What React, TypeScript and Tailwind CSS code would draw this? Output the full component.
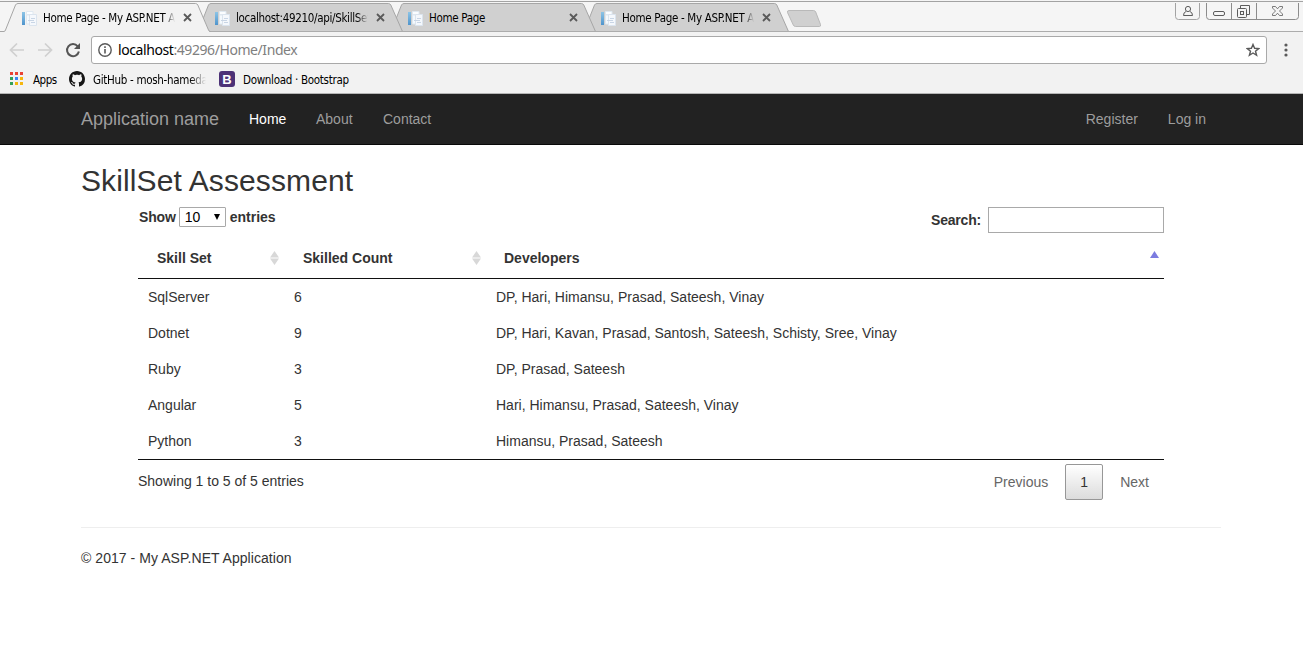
import React from "react";

const tabs = [
  { title: "Home Page - My ASP.NET A", faded: true },
  { title: "localhost:49210/api/SkillSet", faded: true },
  { title: "Home Page", faded: false },
  { title: "Home Page - My ASP.NET A", faded: true },
];

const rows = [
  { skill: "SqlServer", count: 6, developers: "DP, Hari, Himansu, Prasad, Sateesh, Vinay" },
  { skill: "Dotnet", count: 9, developers: "DP, Hari, Kavan, Prasad, Santosh, Sateesh, Schisty, Sree, Vinay" },
  { skill: "Ruby", count: 3, developers: "DP, Prasad, Sateesh" },
  { skill: "Angular", count: 5, developers: "Hari, Himansu, Prasad, Sateesh, Vinay" },
  { skill: "Python", count: 3, developers: "Himansu, Prasad, Sateesh" },
];

function PageIcon() {
  return (
    <svg width="16" height="16" viewBox="0 0 16 16" className="shrink-0">
      <defs>
        <linearGradient id="bar" x1="0" y1="0" x2="0" y2="1">
          <stop offset="0" stopColor="#8cc4e6" />
          <stop offset="1" stopColor="#4f94cc" />
        </linearGradient>
      </defs>
      <rect x="1" y="2" width="3" height="13" fill="url(#bar)" />
      <path d="M5.500 1.500h6.500v3h-6.500z" fill="#fbfdff" stroke="#dfe8f0" />
      <path d="M5.500 5h4v9h-4z" fill="#f4f9fd" stroke="#dfe8f0" />
      <path d="M8.500 4.500h7v11h-7z" fill="#f5f8fc" stroke="#dbe4ee" />
      <path d="M10 8.500h4M7 10.500h6M10 12.500h4" stroke="#c8d5e5" />
    </svg>
  );
}

function TabShapes() {
  return (
    <svg width="1303" height="32" viewBox="0 0 1303 32" className="absolute left-0 top-0">
      <path d="M0 1.500H1303" stroke="#a3a3a3" />
      {[579, 386, 193].map((x) => (
        <path
          key={x}
          transform={`translate(${x} 0)`}
          d="M5 31.500L15.500 5Q16.300 3.500 18 3.500H195.500Q197 3.500 197.800 5L209.500 31.500Z"
          fill="#d0d0d0"
          stroke="#a6a6a6"
        />
      ))}
      <path d="M203 31.500H1303" stroke="#acacac" />
      <path d="M5 32L15.500 5Q16.300 3.500 18 3.500H195.500Q197 3.500 197.800 5L209.500 32Z" fill="#f2f2f2" />
      <path
        d="M0 31.500H4Q5 31.500 5.500 30L15.500 5Q16.300 3.500 18 3.500H195.500Q197 3.500 197.800 5L208.500 30Q209 31.500 210.500 31.500"
        fill="none"
        stroke="#a6a6a6"
      />
      <path
        d="M789 10.500H813.500Q815 10.500 815.700 12L820.500 24.500Q821 26.500 819.500 26.500H795.500Q794 26.500 793.300 25L787.500 12.500Q787 10.500 789 10.500Z"
        fill="#d0d0d0"
        stroke="#b9b9b9"
      />
    </svg>
  );
}

function WindowControls() {
  return (
    <svg width="125" height="20" viewBox="0 0 125 20" className="absolute left-[1175px] top-0" fill="none" stroke="#8c8c8c">
      <path d="M.5 3V16.500Q.5 19.500 3.500 19.500H21.500Q24.500 19.500 24.500 16.500V3" stroke="#a3a3a3" />
      <path d="M31.500 3V16.500Q31.500 19.500 34.500 19.500H120.500Q123.500 19.500 123.500 16.500V3M56.500 3V19M81.500 3V19" />
      <g stroke="#5c5c5c">
        <circle cx="13" cy="9" r="2.600" />
        <path d="M11 11.500Q8.500 12.300 8.500 15.500H17.500Q17.500 12.300 15 11.500" />
        <rect x="38.500" y="11.500" width="11" height="4" rx="1.500" />
        <path d="M65.500 8V5.500H74.500V14.500H71.500" />
        <rect x="62.500" y="8.500" width="9" height="9" rx="1" />
        <rect x="65.500" y="11.500" width="3" height="3" />
        <path
          d="M97.500 6.500H100.500L102.500 8.800L104.500 6.500H107.500V8L104.500 11L107.500 14V15.500H104.500L102.500 13.200L100.500 15.500H97.500V14L100.500 11L97.500 8Z"
          strokeWidth=".8"
        />
      </g>
    </svg>
  );
}

function Browser() {
  return (
    <div className="h-[94px] bg-[#f2f2f2] font-['DejaVu_Sans_Condensed','Noto_Sans',sans-serif] text-[11.5px] text-black">
      <div className="relative h-8 bg-[#f5f5f5]">
        <TabShapes />
        <div className="relative flex h-8 pl-[21px] pt-[9px]">
          {tabs.map((t, i) => (
            <div key={i} className="flex h-[17px] w-[193px] items-center">
              <PageIcon />
              <span
                className={
                  t.faded
                    ? "ml-[6px] w-[132px] whitespace-nowrap leading-4 tracking-[-0.32px] [mask-image:linear-gradient(to_right,#000_92%,transparent)]"
                    : "ml-[6px] w-[132px] whitespace-nowrap leading-4 tracking-[-0.32px]"
                }
              >
                {t.title}
              </span>
              <svg width="9" height="9" viewBox="0 0 9 9" className="ml-[8px]">
                <path d="M1 1L8 8M8 1L1 8" stroke="#5a5a5a" strokeWidth="1.800" />
              </svg>
            </div>
          ))}
        </div>
        <WindowControls />
      </div>
      <div className="flex h-[36px] items-center">
        <svg width="91" height="36" viewBox="0 0 91 36" className="shrink-0" fill="none">
          <path d="M24 18H11M17 11.500L10.500 18L17 24.500M38 18H51M45 11.500L51.500 18L45 24.500" stroke="#d0d0d0" strokeWidth="1.700" />
          <path d="M77.700 14.300A6 6 0 1 0 78.900 19.500" stroke="#555" strokeWidth="2" />
          <path d="M80 11V17H74Z" fill="#555" />
        </svg>
        <div className="flex h-[28px] w-[1176px] items-center rounded-[3px] border border-[#a9a9a9] bg-white pl-[6px] pr-[6px]">
          <svg width="14" height="14" viewBox="0 0 14 14" fill="none" stroke="#5a5a5a">
            <circle cx="7" cy="7" r="6.200" strokeWidth="1.400" />
            <path d="M7 6V10.500M7 3.300V4.900" strokeWidth="1.600" />
          </svg>
          <span className="ml-[6px] whitespace-nowrap font-['Noto_Sans',sans-serif] text-[14px] tracking-[-0.42px] text-[#808080]">
            <span className="text-black">localhost</span>:49296/Home/Index
          </span>
          <svg width="14" height="14" viewBox="0 0 14 14" className="ml-auto" fill="none" stroke="#5a5a5a" strokeWidth="1.400">
            <path d="M7 1.500L8.600 5.300L12.700 5.600L9.500 8.200L10.600 12.300L7 10L3.400 12.300L4.500 8.200L1.300 5.600L5.400 5.300Z" />
          </svg>
        </div>
        <svg width="4" height="14" viewBox="0 0 4 14" className="ml-[17px]" fill="#5a5a5a">
          <circle cx="2" cy="2" r="1.600" />
          <circle cx="2" cy="7" r="1.600" />
          <circle cx="2" cy="12" r="1.600" />
        </svg>
      </div>
      <div className="flex h-[26px] items-start border-b border-[#b5b5b5] pl-[10px]">
        <svg width="13" height="13" viewBox="0 0 13 13" className="mt-[4px]">
          <path d="M0 0h3v3H0zM5 0h3v3H5zM10 0h3v3h-3z" fill="#ea4335" />
          <path d="M0 5h3v3H0zM0 10h3v3H0z" fill="#34a058" />
          <path d="M5 5h3v3H5z" fill="#3b85f4" />
          <path d="M10 5h3v3h-3zM5 10h3v3H5zM10 10h3v3h-3z" fill="#f5b60d" />
        </svg>
        <span className="ml-[10px] mt-[4px] w-[26px] leading-4 tracking-[-0.5px]">Apps</span>
        <svg width="16" height="16" viewBox="0 0 16 16" className="ml-[10px] mt-[3px]">
          <path
            fill="#161616"
            d="M8 0C3.580 0 0 3.580 0 8c0 3.540 2.290 6.530 5.470 7.590.4.070.55-.17.55-.38 0-.19-.01-.82-.01-1.490-2.010.37-2.530-.49-2.690-.94-.09-.23-.48-.94-.82-1.130-.28-.15-.68-.52-.01-.53.63-.01 1.080.58 1.230.82.72 1.210 1.870.87 2.330.66.07-.52.28-.87.51-1.070-1.780-.2-3.640-.89-3.640-3.950 0-.87.31-1.590.82-2.150-.08-.2-.36-1.020.08-2.120 0 0 .67-.21 2.200.82.64-.18 1.320-.27 2-.27s1.360.09 2 .27c1.530-1.040 2.200-.82 2.200-.82.44 1.100.16 1.920.08 2.120.51.56.82 1.270.82 2.150 0 3.070-1.870 3.750-3.650 3.950.29.25.54.73.54 1.480 0 1.070-.01 1.930-.01 2.200 0 .21.15.46.55.38A8.010 8.010 0 0 0 16 8c0-4.420-3.580-8-8-8z"
          />
        </svg>
        <span className="ml-[8px] mt-[4px] w-[113px] whitespace-nowrap leading-4 tracking-[-0.3px] [mask-image:linear-gradient(to_right,#000_86%,transparent)]">
          GitHub - mosh-hameda
        </span>
        <span className="ml-[13px] mt-[3px] flex h-4 w-4 items-center justify-center rounded-[3px] bg-[#4d3277] font-['Liberation_Sans',sans-serif] text-[13px] font-bold leading-none text-white">
          B
        </span>
        <span className="ml-[8px] mt-[4px] whitespace-nowrap leading-4 tracking-[-0.3px]">Download · Bootstrap</span>
      </div>
    </div>
  );
}

function SortBoth() {
  return (
    <svg width="9" height="14" viewBox="0 0 9 14" fill="#d8d8d8">
      <path d="M4.500 0L9 6.500H0ZM4.500 14L9 7.500H0Z" />
    </svg>
  );
}

export default function App() {
  return (
    <div className="h-[665px] w-[1303px] overflow-hidden bg-white font-['Liberation_Sans',Arial,sans-serif] text-[14px] leading-5 text-[#333]">
      <Browser />
      <nav className="flex h-[51px] items-center border-b border-[#080808] bg-[#222] pl-[81px] pr-[97px] text-[#9d9d9d]">
        <a className="w-[168px] text-[18px]">Application name</a>
        <a className="w-[67px] text-white">Home</a>
        <a className="w-[67px]">About</a>
        <a>Contact</a>
        <a className="ml-auto">Register</a>
        <a className="ml-[30px]">Log in</a>
      </nav>
      <main className="ml-[81px] w-[1140px]">
        <h2 className="h-[62px] pt-[19px] text-[30px] leading-[33px] tracking-[0.11px]">SkillSet Assessment</h2>
        <section className="mx-auto w-[1026px]">
          <div className="flex h-[31px] items-start justify-between font-bold">
            <label className="flex h-5 items-center pl-px">
              <span className="tracking-[-0.15px]">Show</span>
              <span className="ml-[3px] mr-[4px] flex h-5 w-[47px] items-center justify-between rounded-[1px] border border-[#a9a9a9] pl-[5px] pr-[5px] font-normal text-black">
                10
                <svg width="6" height="6" viewBox="0 0 6 6">
                  <path d="M0 0H6L3 6Z" fill="#000" />
                </svg>
              </span>
              entries
            </label>
            <label className="flex items-center tracking-[-0.2px]">
              Search:
              <input className="ml-[7px] h-[26px] w-[176px] border border-[#a9a9a9] bg-white" />
            </label>
          </div>
          <table className="w-full table-fixed border-separate border-spacing-0 text-left">
            <colgroup>
              <col className="w-[146px]" />
              <col className="w-[202px]" />
              <col />
            </colgroup>
            <thead>
              <tr className="h-[41px]">
                <th className="border-b border-[#111] p-0 pl-[19px] pr-[5px]">
                  <div className="flex items-center justify-between">Skill Set<SortBoth /></div>
                </th>
                <th className="border-b border-[#111] p-0 pl-[19px] pr-[5px]">
                  <div className="flex items-center justify-between">Skilled Count<SortBoth /></div>
                </th>
                <th className="border-b border-[#111] p-0 pl-[18px] pr-[5px]">
                  <div className="flex items-center justify-between">
                    Developers
                    <svg width="9" height="14" viewBox="0 0 9 14" fill="#7c7ce0">
                      <path d="M4.500 0L9 7H0Z" />
                    </svg>
                  </div>
                </th>
              </tr>
            </thead>
            <tbody>
              {rows.map((r) => (
                <tr key={r.skill} className="h-[36px]">
                  <td className="p-0 pl-[10px]">{r.skill}</td>
                  <td className="p-0 pl-[10px]">{r.count}</td>
                  <td className="p-0 pl-[10px]">{r.developers}</td>
                </tr>
              ))}
            </tbody>
          </table>
          <div className="flex h-[68px] items-start justify-between border-t border-[#111]">
            <p className="pt-[11px]">Showing 1 to 5 of 5 entries</p>
            <div className="flex items-center pr-[15px] pt-[4px] text-[#666]">
              <span>Previous</span>
              <span className="mx-[17px] flex h-[36px] w-[38px] items-center justify-center rounded-[2px] border border-[#979797] bg-linear-to-b from-white to-[#dcdcdc] text-[#333]">
                1
              </span>
              <span>Next</span>
            </div>
          </div>
        </section>
        <hr className="border-[#eee]" />
        <footer className="pt-[20px] tracking-[0.05px]">© 2017 - My ASP.NET Application</footer>
      </main>
    </div>
  );
}
